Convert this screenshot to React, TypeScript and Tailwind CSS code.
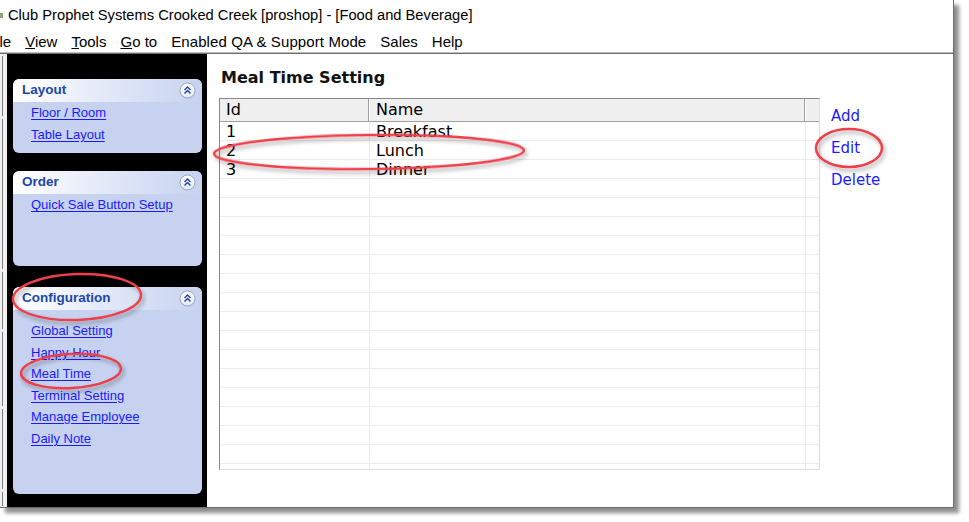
import React from "react";

const sideSegments = [
  [2, 62],
  [65, 215],
  [218, 275],
  [278, 352],
  [355, 435],
  [438, 452],
];

function CollapseButton() {
  return (
    <svg width="17" height="17" viewBox="0 0 17 17" className="shrink-0">
      <defs>
        <linearGradient id="btnFill" x1="0" y1="0" x2="0" y2="1">
          <stop offset="0" stopColor="#ffffff" />
          <stop offset="1" stopColor="#e4e9f6" />
        </linearGradient>
      </defs>
      <circle cx="8.5" cy="8.5" r="7.5" fill="url(#btnFill)" stroke="#9aa3bd" strokeWidth="1" />
      <path d="M5.5 8 L8.5 5 L11.5 8" fill="none" stroke="#1f3f9c" strokeWidth="1.4" />
      <path d="M5.5 11.5 L8.5 8.5 L11.5 11.5" fill="none" stroke="#1f3f9c" strokeWidth="1.4" />
    </svg>
  );
}

function Panel({
  title,
  links,
  height,
  listClass,
}: {
  title: string;
  links: string[];
  height: string;
  listClass: string;
}) {
  return (
    <div className={`w-[189px] ${height} rounded-[6px] bg-[#c6d2ef] flex flex-col overflow-hidden`}>
      <div className="h-[23px] shrink-0 flex items-center justify-between pl-[9px] pr-[6px] bg-gradient-to-r from-[#ffffff] to-[#c6d2ef] rounded-t-[6px]">
        <span className="font-['Liberation_Sans',Arial,sans-serif] font-bold text-[13.5px] text-[#2146a8]">
          {title}
        </span>
        <CollapseButton />
      </div>
      <div className={`flex flex-col pl-[18px] ${listClass}`}>
        {links.map((l) => (
          <a
            key={l}
            href="#"
            className="font-['Liberation_Sans',Arial,sans-serif] text-[13px] text-[#1a1aff] underline underline-offset-[2px] w-fit"
          >
            {l}
          </a>
        ))}
      </div>
    </div>
  );
}

const rows = [
  ["1", "Breakfast"],
  ["2", "Lunch"],
  ["3", "Dinner"],
];

export default function App() {
  const bodyRows = Array.from({ length: 19 }, (_, i) => rows[i] ?? ["", ""]);

  return (
    <div className="relative w-[969px] h-[522px] bg-white overflow-hidden">
      {/* application window, cropped on the left */}
      <div className="w-[954px] h-[508px] bg-white border-r border-b border-[#6b6b6b] shadow-[5px_5px_4px_rgba(0,0,0,0.45)] flex flex-col">
        {/* title bar */}
        <div className="h-[29px] shrink-0 pt-[2px] flex items-center font-['Liberation_Sans',Arial,sans-serif] text-[14.7px] text-black">
          <span className="w-[3px] h-[5px] bg-[#8ea37a] mr-[5px]" />
          Club Prophet Systems Crooked Creek [proshop] - [Food and Beverage]
        </div>

        {/* menu bar */}
        <div className="h-[25px] shrink-0 pt-[2px] flex items-center gap-[14px] overflow-hidden border-b border-[#6e6e6e] shadow-[0_-1px_0_#bdbdbd_inset] font-['Liberation_Sans',Arial,sans-serif] text-[15px] text-black">
          <span className="-ml-[13px]">
            <span className="underline">F</span>ile
          </span>
          <span>
            <span className="underline">V</span>iew
          </span>
          <span>
            <span className="underline">T</span>ools
          </span>
          <span>
            <span className="underline">G</span>o to
          </span>
          <span className="tracking-[0.1px]">Enabled QA &amp; Support Mode</span>
          <span>Sales</span>
          <span>Help</span>
        </div>

        {/* body */}
        <div className="flex-1 flex min-h-0">
          {/* splitter strip */}
          <div className="w-[7px] shrink-0 bg-[#f0f0f0] relative">
            {sideSegments.map(([a, b]) => (
              <div
                key={a}
                className="absolute left-[2px] w-[1px] bg-[#7c7c7c]"
                style={{ top: a, height: b - a }}
              />
            ))}
          </div>

          {/* task pane */}
          <div className="w-[200px] shrink-0 bg-black pl-[6px] pt-[25px] flex flex-col">
            <Panel title="Layout" links={["Floor / Room", "Table Layout"]} height="h-[74px]" listClass="leading-[22px]" />
            <div className="mt-[18px]">
              <Panel title="Order" links={["Quick Sale Button Setup"]} height="h-[95px]" listClass="leading-[22px]" />
            </div>
            <div className="mt-[21px]">
              <Panel
                title="Configuration"
                links={["Global Setting", "Happy Hour", "Meal Time", "Terminal Setting", "Manage Employee", "Daily Note"]}
                height="h-[207px]"
                listClass="pt-[10px] leading-[21.5px]"
              />
            </div>
          </div>

          {/* content */}
          <div className="flex-1 pl-[12px] pt-[14px] flex flex-col">
            <h1 className="ml-[2px] font-['DejaVu_Sans',Verdana,sans-serif] font-bold text-[16px] leading-[20px] text-[#111]">
              Meal Time Setting
            </h1>
            <div className="mt-[10px] flex gap-[11px]">
              <div className="w-[601px] h-[372px] flex flex-col overflow-hidden border-l border-t border-[#868686] border-r border-r-[#dedede] border-b border-b-[#dedede] font-['DejaVu_Sans',Verdana,sans-serif] text-[16px] text-black">
                <div className="h-[23px] shrink-0 flex bg-[#f0f0f0] border-b border-[#a0a0a0] shadow-[0_1px_0_#ffffff]">
                  <div className="w-[149px] pl-[6px] leading-[22px] border-r border-[#a0a0a0] shadow-[1px_0_0_#ffffff]">Id</div>
                  <div className="w-[436px] pl-[7px] leading-[22px] border-r border-[#a0a0a0] shadow-[1px_0_0_#ffffff]">Name</div>
                  <div className="flex-1" />
                </div>
                {bodyRows.map(([id, name], i) => (
                  <div key={i} className="h-[19px] shrink-0 flex border-b border-[#ebebeb]">
                    <div className="w-[150px] pl-[6px] leading-[19px] border-r border-[#ebebeb]">{id}</div>
                    <div className="w-[436px] pl-[6px] leading-[19px] border-r border-[#ebebeb]">{name}</div>
                    <div className="flex-1" />
                  </div>
                ))}
              </div>

              <div className="mt-[2px] flex flex-col font-['DejaVu_Sans',Verdana,sans-serif] text-[15px] text-[#1a1aff]">
                {["Add", "Edit", "Delete"].map((b) => (
                  <span key={b} className="h-[32px] flex items-center">
                    {b}
                  </span>
                ))}
              </div>
            </div>
          </div>
        </div>
      </div>

      {/* callout rings */}
      <svg className="absolute inset-0 pointer-events-none" width="969" height="522">
        <defs>
          <filter id="ringShadow" x="-20%" y="-40%" width="140%" height="180%">
            <feDropShadow dx="2" dy="3" stdDeviation="2" floodColor="#000" floodOpacity="0.35" />
          </filter>
        </defs>
        <g fill="none" stroke="#ee3f4b" strokeWidth="2.5" filter="url(#ringShadow)">
          <ellipse cx="77" cy="297" rx="64" ry="23" transform="rotate(-2 77 297)" />
          <ellipse cx="71" cy="371" rx="50" ry="17" transform="rotate(-3 71 371)" />
          <ellipse cx="369" cy="152" rx="155" ry="17" transform="rotate(-0.6 369 152)" />
          <ellipse cx="849" cy="148" rx="33" ry="19" />
        </g>
      </svg>
    </div>
  );
}
